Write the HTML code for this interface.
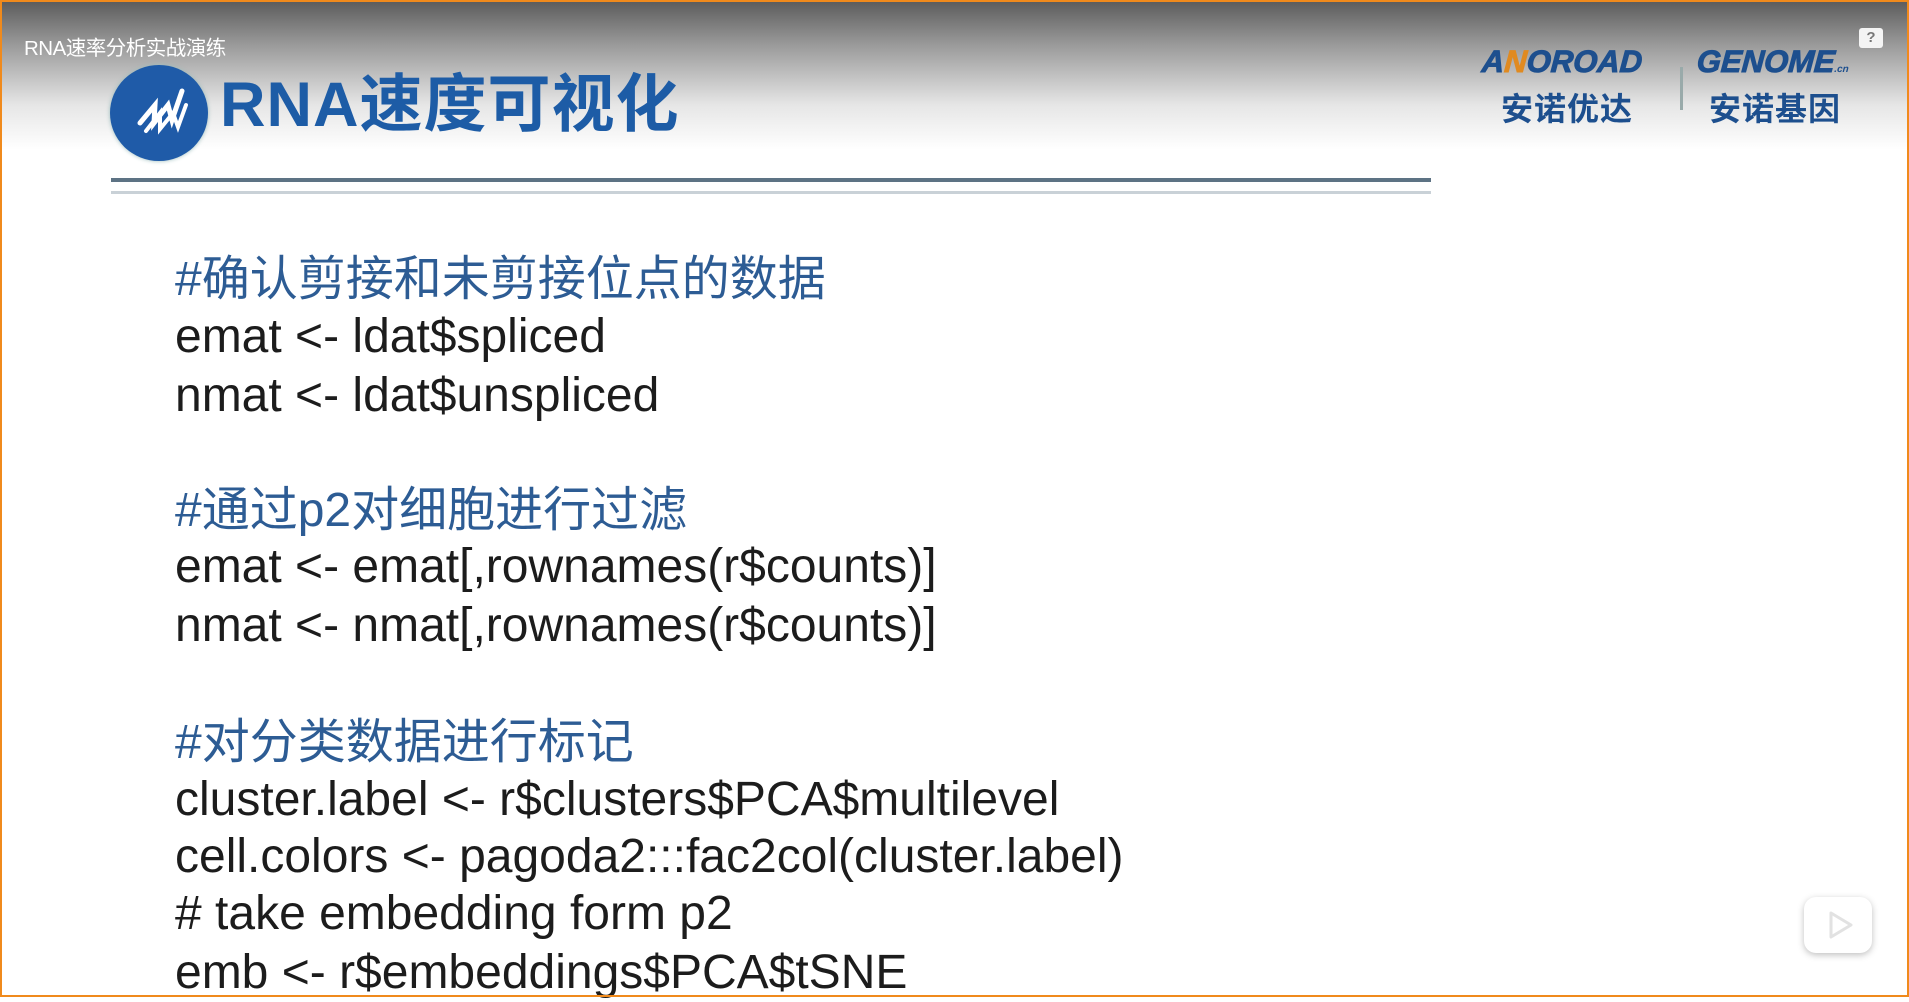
<!DOCTYPE html>
<html><head><meta charset="utf-8"><style>
html,body{margin:0;padding:0}
body{width:1909px;height:997px;position:relative;overflow:hidden;background:#fff;font-family:"Liberation Sans","Noto Sans CJK SC",sans-serif}
.frame{position:absolute;left:0;top:0;width:1905px;height:993px;border:2px solid #f08a1c;z-index:10;pointer-events:none}
.top{position:absolute;left:0;top:0;width:1909px;height:150px;background:linear-gradient(#5a5a5a 0%,#9a9a9a 30%,#e6e6e6 70%,#fff 100%)}
.ptitle{position:absolute;left:24px;top:31px;font-size:20.5px;color:#fff;letter-spacing:-0.5px}
.circle{position:absolute;left:110px;top:65px;width:98px;height:96px;border-radius:50%;background:#1f5ba8;box-shadow:0 0 4px #9bb}
.title{position:absolute;left:220px;top:67px;font-size:63px;font-weight:bold;color:#1d5ca6;line-height:76px;letter-spacing:1px}
.l1{position:absolute;left:111px;top:178px;width:1320px;height:4px;background:#5d7384}
.l2{position:absolute;left:111px;top:191px;width:1320px;height:3px;background:#c9d1d7}
.c{position:absolute;left:175px;font-size:48px;line-height:58px;color:#1c1c1c;white-space:pre}
.cm{color:#2d5c94}
.logo{position:absolute;font-weight:900;font-style:italic;color:#1d4f8e;font-size:31px;transform:skewX(-4deg);-webkit-text-stroke:1px #1d4f8e}
.cn{position:absolute;font-weight:bold;color:#1d4f8e;font-size:32px;letter-spacing:1px}
</style></head><body>
<div class="top"></div>
<div class="ptitle">RNA速率分析实战演练</div>
<div class="circle"><svg width="98" height="96" viewBox="0 0 98 96"><g fill="none" stroke="#fff" stroke-width="5" stroke-linecap="round"><path d="M30 58 L45 40 L44 58 L58 40 L62 55 L72 26"/><path d="M36 66 L50 48 L50 64 L63 48 L68 62 L76 40" stroke-width="4"/></g></svg></div>
<div class="title">RNA速度可视化</div>
<div class="l1"></div><div class="l2"></div>

<div class="c cm" style="top:251px">#确认剪接和未剪接位点的数据</div>
<div class="c" style="top:308px">emat &lt;- ldat$spliced</div>
<div class="c" style="top:367px">nmat &lt;- ldat$unspliced</div>
<div class="c cm" style="top:482px">#通过p2对细胞进行过滤</div>
<div class="c" style="top:538px">emat &lt;- emat[,rownames(r$counts)]</div>
<div class="c" style="top:597px">nmat &lt;- nmat[,rownames(r$counts)]</div>
<div class="c cm" style="top:714px">#对分类数据进行标记</div>
<div class="c" style="top:771px">cluster.label &lt;- r$clusters$PCA$multilevel</div>
<div class="c" style="top:828px">cell.colors &lt;- pagoda2:::fac2col(cluster.label)</div>
<div class="c" style="top:885px"># take embedding form p2</div>
<div class="c" style="top:944px">emb &lt;- r$embeddings$PCA$tSNE</div>

<div class="logo" style="left:1482px;top:44px">A<span style="color:#e08a20;-webkit-text-stroke:1px #e08a20">N</span>OROAD</div>
<div class="cn" style="left:1501px;top:84px">安诺优达</div>
<div style="position:absolute;left:1680px;top:67px;width:3px;height:43px;background:#9aa"></div>
<div class="logo" style="left:1697px;top:44px">GENOME<span style="font-size:10px;-webkit-text-stroke:0">.cn</span></div>
<div class="cn" style="left:1709px;top:84px">安诺基因</div>
<div style="position:absolute;left:1859px;top:28px;width:24px;height:20px;background:#f4f4f4;border-radius:3px;font-size:15px;font-weight:bold;color:#777;text-align:center;line-height:20px">?</div>
<div style="position:absolute;left:1804px;top:897px;width:68px;height:56px;background:#fff;border-radius:12px;box-shadow:0 2px 7px rgba(0,0,0,.25)"><svg width="68" height="56"><path d="M27 16 L47 28 L27 40 Z" fill="#fff" stroke="#e2e2e2" stroke-width="3" stroke-linejoin="round"/></svg></div>
<div class="frame"></div>
</body></html>
